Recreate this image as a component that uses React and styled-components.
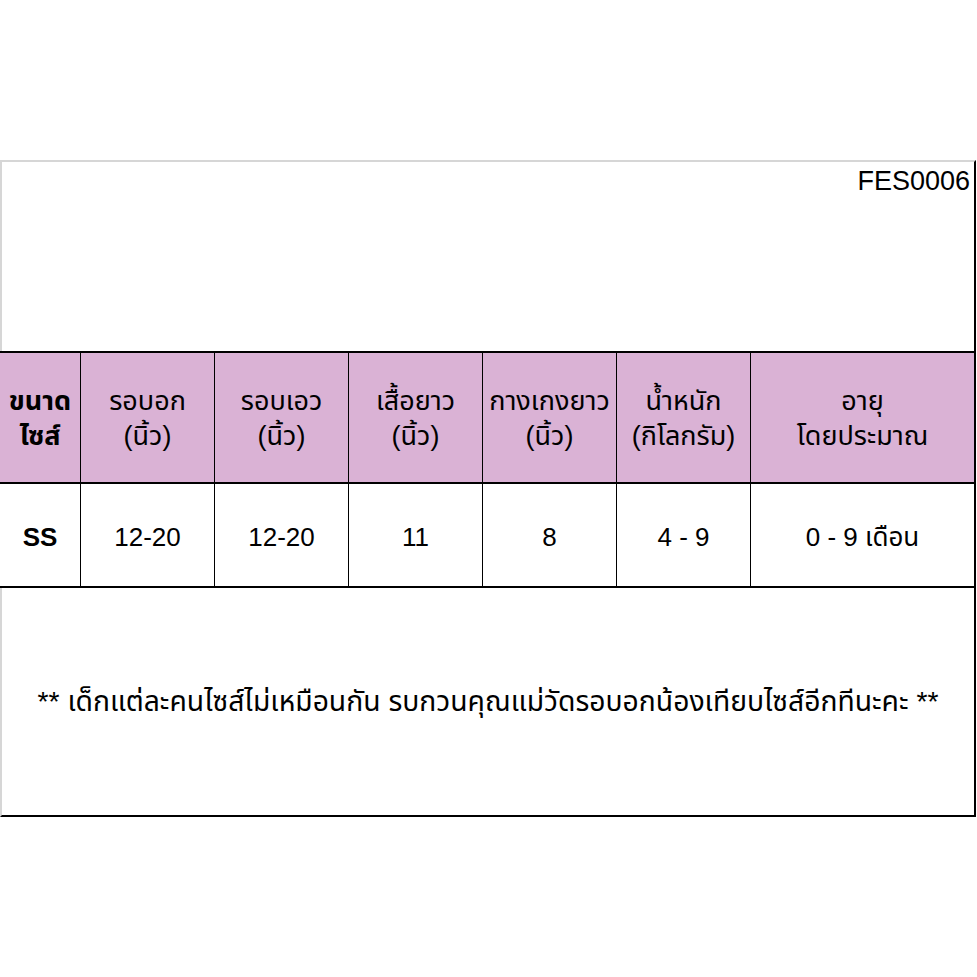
import React from 'react';
import styled, { createGlobalStyle } from 'styled-components';

const GlobalStyle = createGlobalStyle`
  html, body {
    margin: 0;
    padding: 0;
    background: #ffffff;
  }
  body {
    font-family: "Liberation Sans", "Noto Sans Thai", "Noto Sans", Tahoma, sans-serif;
    color: #111;
  }
`;

const columnas = [
  { titulo: ['ขนาด', 'ไซส์'], valor: 'SS', bold: true },
  { titulo: ['รอบอก', '(นิ้ว)'], valor: '12-20' },
  { titulo: ['รอบเอว', '(นิ้ว)'], valor: '12-20' },
  { titulo: ['เสื้อยาว', '(นิ้ว)'], valor: '11' },
  { titulo: ['กางเกงยาว', '(นิ้ว)'], valor: '8' },
  { titulo: ['น้ำหนัก', '(กิโลกรัม)'], valor: '4 - 9' },
  { titulo: ['อายุ', 'โดยประมาณ'], valor: '0 - 9 เดือน' },
];

function App() {
  return (
    <Pagina>
      <GlobalStyle />
      <Hoja>
        <Cabecera>
          <Codigo>FES0006</Codigo>
        </Cabecera>
        <Tabla>
          {columnas.map((c, i) => (
            <Celda key={'t' + i} $header $bold={c.bold} $last={i === columnas.length - 1}>
              <span>{c.titulo[0]}</span>
              <span>{c.titulo[1]}</span>
            </Celda>
          ))}
          {columnas.map((c, i) => (
            <Celda key={'v' + i} $bold={c.bold} $last={i === columnas.length - 1}>
              {c.valor}
            </Celda>
          ))}
        </Tabla>
        <Nota>
          ** เด็กแต่ละคนไซส์ไม่เหมือนกัน รบกวนคุณแม่วัดรอบอกน้องเทียบไซส์อีกทีนะคะ **
        </Nota>
      </Hoja>
    </Pagina>
  );
}

const Pagina = styled.div`
  width: 977px;
  height: 977px;
  padding-top: 160px;
  box-sizing: border-box;
`;

const Hoja = styled.div`
  width: 976px;
  height: 657px;
  box-sizing: border-box;
  border-top: 2px solid #d6d6d6;
  border-left: 2px solid #d6d6d6;
  border-right: 2px solid #000;
  border-bottom: 2px solid #000;
  display: flex;
  flex-direction: column;
`;

const Cabecera = styled.div`
  height: 189px;
  display: flex;
  justify-content: flex-end;
  align-items: flex-start;
  padding: 2px 4px 0 0;
  box-sizing: border-box;
`;

const Codigo = styled.div`
  font-size: 27px;
  line-height: 34px;
  color: #000;
`;

const Tabla = styled.div`
  display: grid;
  grid-template-columns: 81px repeat(5, 134px) 1fr;
  grid-template-rows: 131px 104px;
  border-top: 2px solid #000;
  margin-left: -2px;
`;

const Celda = styled.div`
  display: flex;
  flex-direction: column;
  align-items: center;
  justify-content: center;
  background: ${p => (p.$header ? '#dab2d5' : '#ffffff')};
  border-right: ${p => (p.$last ? 'none' : '1.5px solid #000')};
  border-bottom: 2px solid #000;
  font-size: ${p => (p.$header ? '27px' : '26px')};
  font-weight: ${p => (p.$bold ? 700 : 400)};
  line-height: 35px;
  color: #000;
  text-align: center;
  white-space: nowrap;
  box-sizing: border-box;
  padding-top: ${p => (p.$header ? '2px' : '5px')};
`;

const Nota = styled.div`
  flex: 1;
  display: flex;
  align-items: center;
  justify-content: center;
  font-size: 28.3px;
  color: #000;
  white-space: nowrap;
  padding-top: 2px;
`;

export default App;
